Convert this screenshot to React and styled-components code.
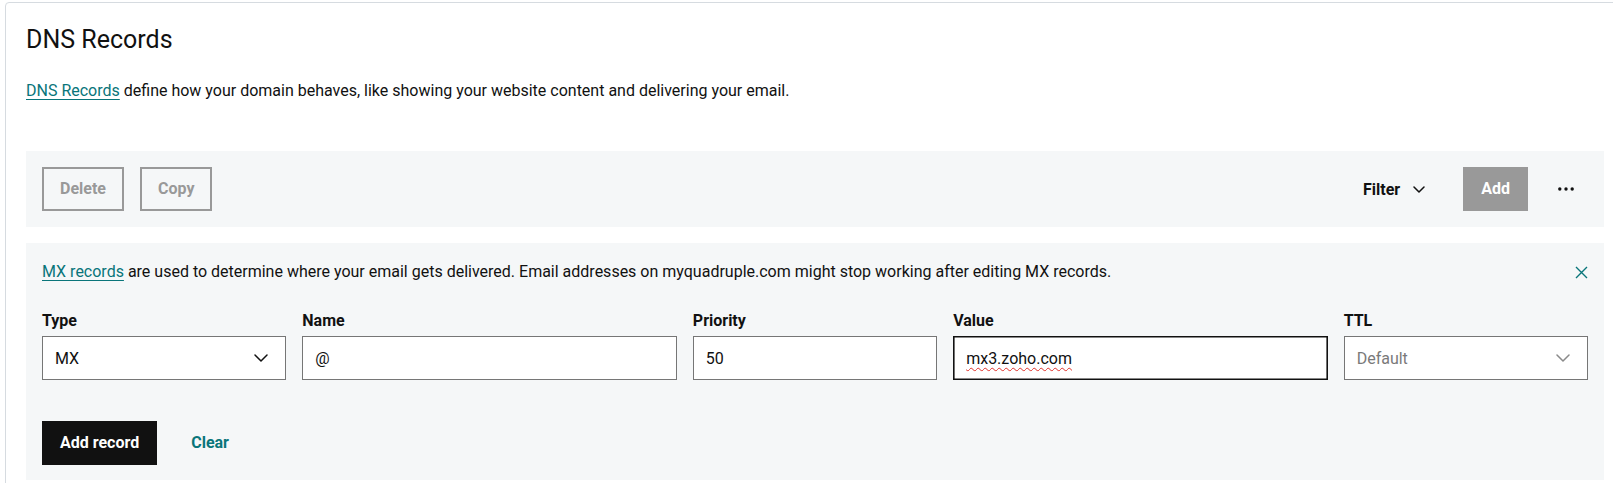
import React from 'react';
import styled, { createGlobalStyle } from 'styled-components';

const GlobalStyle = createGlobalStyle`
  html, body { margin: 0; padding: 0; background: #fff; overflow: hidden; }
  body { font-family: Roboto, "Liberation Sans", sans-serif; color: #111; }
  *, *::before, *::after { box-sizing: border-box; }
`;

const teal = '#09757a';

const Page = styled.div`
  padding: 2px 0 0 5px;
`;

const Card = styled.section`
  width: 1620px;
  min-height: 490px;
  border: 1px solid #d6dbe0;
  border-radius: 4px 0 0 0;
  padding: 22px 20px 0 20px;
  background: #fff;
`;

const Title = styled.h2`
  margin: 0;
  font-size: 25px;
  line-height: 30px;
  font-weight: 400;
  color: #111;
`;

const Intro = styled.p`
  margin: 24px 0 48px;
  font-size: 16px;
  line-height: 24px;
`;

const Link = styled.a`
  color: ${teal};
  text-decoration: underline;
  text-underline-offset: 3px;
  text-decoration-thickness: 1px;
  cursor: pointer;
`;

const Toolbar = styled.div`
  display: flex;
  align-items: center;
  justify-content: space-between;
  padding: 16px;
  background: #f5f7f8;
`;

const Group = styled.div`
  display: flex;
  align-items: center;
  gap: 16px;
`;

const Button = styled.button`
  height: 44px;
  padding: 0 16px;
  border: 2px solid ${p => (p.$variant === 'primary' ? '#111' : p.$variant === 'text' ? 'transparent' : '#999')};
  background: ${p => (p.$variant === 'primary' ? '#111' : p.$variant === 'disabled' ? '#999' : 'transparent')};
  color: ${p => (p.$variant === 'primary' || p.$variant === 'disabled' ? '#fff' : p.$variant === 'text' ? teal : '#999')};
  font-family: inherit;
  font-size: 16px;
  font-weight: 700;
  line-height: 24px;
  border-radius: 0;
  cursor: pointer;
  display: inline-flex;
  align-items: center;
`;

const FilterButton = styled.button`
  height: 44px;
  padding: 0 22px;
  border: 0;
  background: transparent;
  display: inline-flex;
  align-items: center;
  gap: 13px;
  font-family: inherit;
  font-size: 16px;
  font-weight: 700;
  color: #111;
  cursor: pointer;
`;

const IconButton = styled.button`
  width: ${p => p.$size || 44}px;
  height: ${p => p.$size || 44}px;
  padding: 0;
  border: 0;
  background: transparent;
  display: inline-flex;
  align-items: center;
  justify-content: ${p => p.$align || 'center'};
  cursor: pointer;
  color: ${p => p.$color || '#111'};
`;

const Panel = styled.div`
  margin-top: 16px;
  padding: 17px 16px 15px 16px;
  background: #f5f7f8;
`;

const Notice = styled.div`
  display: flex;
  align-items: center;
  justify-content: space-between;
  min-height: 24px;
  font-size: 16px;
  line-height: 24px;
`;

const FormGrid = styled.div`
  margin-top: 25px;
  display: grid;
  grid-template-columns: repeat(12, 1fr);
  column-gap: 16px;
`;

const FieldGroup = styled.label`
  grid-column: span ${p => p.$span};
  display: flex;
  flex-direction: column;
  gap: 3px;
`;

const Label = styled.span`
  font-size: 16px;
  line-height: 24px;
  font-weight: 700;
  color: #111;
`;

const fieldBase = `
  width: 100%;
  height: 44px;
  padding: 0 12px;
  border-radius: 0;
  background: #fff;
  font-family: inherit;
  font-size: 16px;
  color: #111;
  outline: none;
`;

const Input = styled.input`
  ${fieldBase}
  border: 1px solid #767676;
`;

const FocusedField = styled.div`
  ${fieldBase}
  display: flex;
  align-items: center;
  border: 1px solid #111;
  box-shadow: inset 0 0 0 0.6px #111;
  cursor: text;
`;

const Misspelled = styled.span`
  text-decoration: underline wavy #e0302a;
  text-decoration-thickness: 1px;
  text-underline-offset: 3px;
`;

const Select = styled.div`
  height: 44px;
  padding: 0 17px 0 12px;
  border: 1px solid #767676;
  background: #fff;
  display: flex;
  align-items: center;
  justify-content: space-between;
  font-size: 16px;
  color: ${p => (p.$placeholder ? '#7a7a7a' : '#111')};
  cursor: pointer;
`;

const Actions = styled.div`
  margin-top: 41px;
  display: flex;
  align-items: center;
  gap: 16px;
`;

const Chevron = ({ w = 14, color = '#111', sw = 1.5 }) => (
  <svg width={w} height={w / 2 + 1} viewBox={`0 0 ${w} ${w / 2 + 1}`} fill="none">
    <path d={`M1 1 L${w / 2} ${w / 2} L${w - 1} 1`} stroke={color} strokeWidth={sw} strokeLinecap="round" strokeLinejoin="round" />
  </svg>
);

const CloseIcon = () => (
  <svg width="13" height="13" viewBox="0 0 13 13" fill="none">
    <path d="M1 1L12 12M12 1L1 12" stroke={teal} strokeWidth="1.4" />
  </svg>
);

const DotsIcon = () => (
  <svg width="16" height="4" viewBox="0 0 16 4" fill="#111">
    <circle cx="1.8" cy="2" r="1.7" />
    <circle cx="8" cy="2" r="1.7" />
    <circle cx="14.2" cy="2" r="1.7" />
  </svg>
);

export default function App() {
  return (
    <>
      <GlobalStyle />
      <Page>
        <Card>
          <Title>DNS Records</Title>
          <Intro>
            <Link>DNS Records</Link> define how your domain behaves, like showing your website content and delivering your email.
          </Intro>

          <Toolbar>
            <Group>
              <Button $variant="outline">Delete</Button>
              <Button $variant="outline">Copy</Button>
            </Group>
            <Group>
              <FilterButton>
                Filter
                <Chevron w={12} />
              </FilterButton>
              <Button $variant="disabled">Add</Button>
              <IconButton aria-label="More">
                <DotsIcon />
              </IconButton>
            </Group>
          </Toolbar>

          <Panel>
            <Notice>
              <span>
                <Link>MX records</Link> are used to determine where your email gets delivered. Email addresses on myquadruple.com might stop working after editing MX records.
              </span>
              <IconButton $size={24} $align="flex-end" aria-label="Close">
                <CloseIcon />
              </IconButton>
            </Notice>

            <FormGrid>
              <FieldGroup $span={2}>
                <Label>Type</Label>
                <Select>
                  MX
                  <Chevron w={14} />
                </Select>
              </FieldGroup>
              <FieldGroup $span={3}>
                <Label>Name</Label>
                <Input readOnly defaultValue="@" />
              </FieldGroup>
              <FieldGroup $span={2}>
                <Label>Priority</Label>
                <Input readOnly defaultValue="50" />
              </FieldGroup>
              <FieldGroup $span={3}>
                <Label>Value</Label>
                <FocusedField role="textbox">
                  <Misspelled>mx3.zoho.com</Misspelled>
                </FocusedField>
              </FieldGroup>
              <FieldGroup $span={2}>
                <Label>TTL</Label>
                <Select $placeholder>
                  Default
                  <Chevron w={14} color="#8a8a8a" />
                </Select>
              </FieldGroup>
            </FormGrid>

            <Actions>
              <Button $variant="primary">Add record</Button>
              <Button $variant="text">Clear</Button>
            </Actions>
          </Panel>
        </Card>
      </Page>
    </>
  );
}
